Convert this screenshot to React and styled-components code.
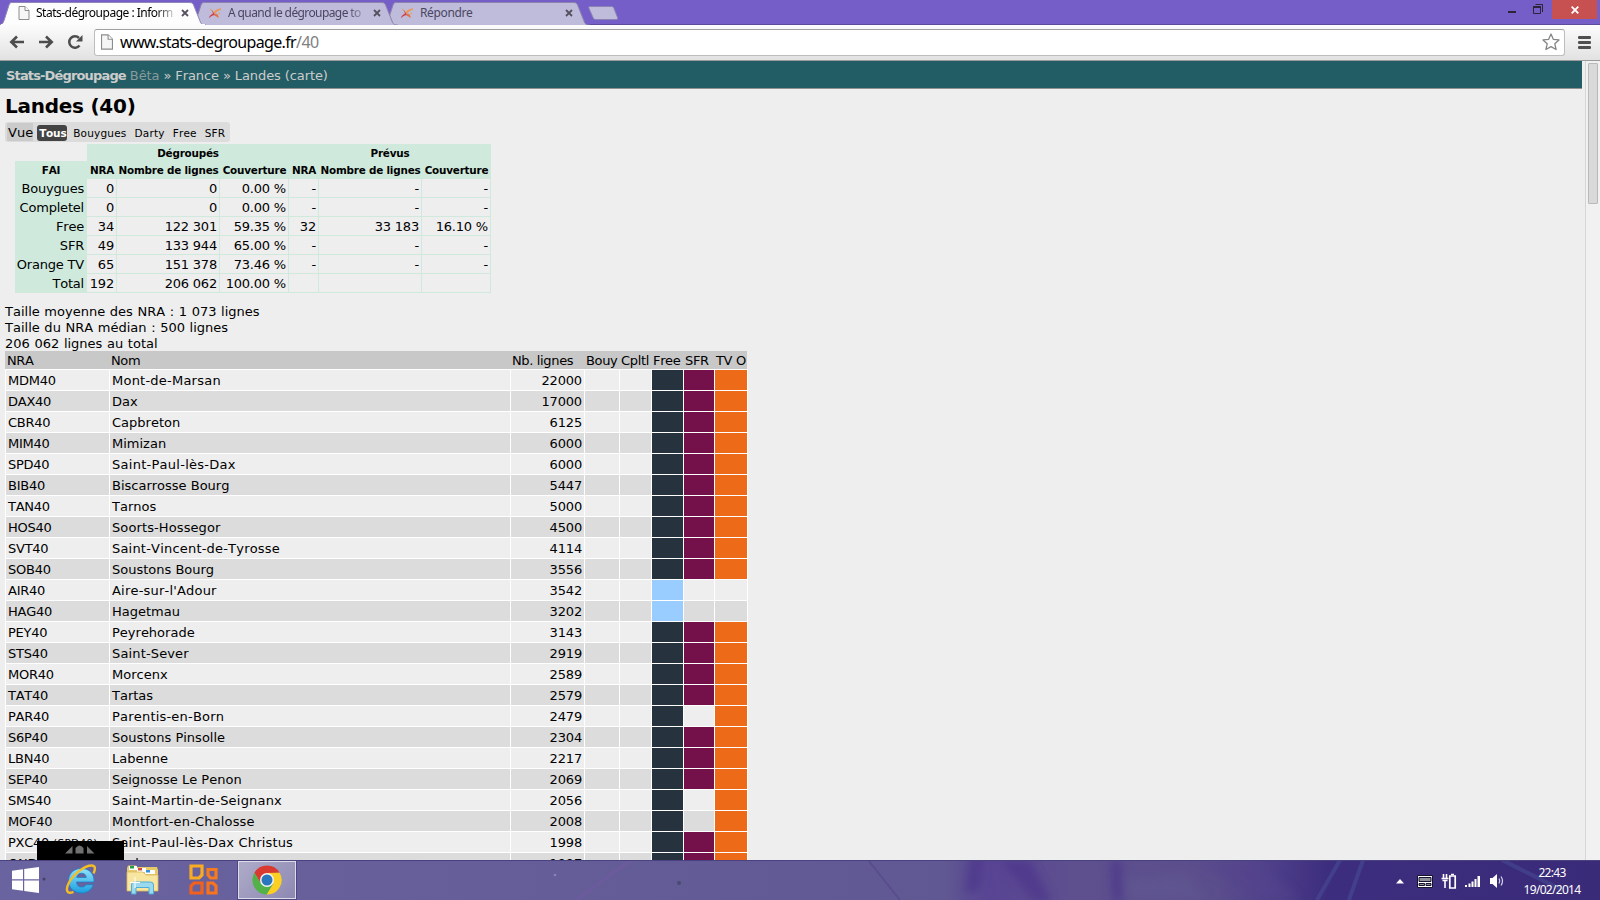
import React from "react";
import styled, { createGlobalStyle } from "styled-components";

const GlobalStyle = createGlobalStyle`
  * {
    box-sizing: border-box;
  }
  body {
    margin: 0;
    overflow: hidden;
    font-family: "DejaVu Sans", Verdana, sans-serif;
    font-size: 13px;
    font-kerning: none;
    color: #000;
  }
  svg {
    display: block;
    flex: none;
  }
`;

const fais = [
  ["Bouygues", "0", "0", "0.00 %", "-", "-", "-"],
  ["Completel", "0", "0", "0.00 %", "-", "-", "-"],
  ["Free", "34", "122 301", "59.35 %", "32", "33 183", "16.10 %"],
  ["SFR", "49", "133 944", "65.00 %", "-", "-", "-"],
  ["Orange TV", "65", "151 378", "73.46 %", "-", "-", "-"],
  ["Total", "192", "206 062", "100.00 %", "", "", ""],
];

// free: "on" | "planned", sfr / tv: degrouped or not
const nras = [
  { code: "MDM40", name: "Mont-de-Marsan", lines: 22000, free: "on", sfr: true, tv: true },
  { code: "DAX40", name: "Dax", lines: 17000, free: "on", sfr: true, tv: true },
  { code: "CBR40", name: "Capbreton", lines: 6125, free: "on", sfr: true, tv: true },
  { code: "MIM40", name: "Mimizan", lines: 6000, free: "on", sfr: true, tv: true },
  { code: "SPD40", name: "Saint-Paul-lès-Dax", lines: 6000, free: "on", sfr: true, tv: true },
  { code: "BIB40", name: "Biscarrosse Bourg", lines: 5447, free: "on", sfr: true, tv: true },
  { code: "TAN40", name: "Tarnos", lines: 5000, free: "on", sfr: true, tv: true },
  { code: "HOS40", name: "Soorts-Hossegor", lines: 4500, free: "on", sfr: true, tv: true },
  { code: "SVT40", name: "Saint-Vincent-de-Tyrosse", lines: 4114, free: "on", sfr: true, tv: true },
  { code: "SOB40", name: "Soustons Bourg", lines: 3556, free: "on", sfr: true, tv: true },
  { code: "AIR40", name: "Aire-sur-l'Adour", lines: 3542, free: "planned", sfr: false, tv: false },
  { code: "HAG40", name: "Hagetmau", lines: 3202, free: "planned", sfr: false, tv: false },
  { code: "PEY40", name: "Peyrehorade", lines: 3143, free: "on", sfr: true, tv: true },
  { code: "STS40", name: "Saint-Sever", lines: 2919, free: "on", sfr: true, tv: true },
  { code: "MOR40", name: "Morcenx", lines: 2589, free: "on", sfr: true, tv: true },
  { code: "TAT40", name: "Tartas", lines: 2579, free: "on", sfr: true, tv: true },
  { code: "PAR40", name: "Parentis-en-Born", lines: 2479, free: "on", sfr: false, tv: true },
  { code: "S6P40", name: "Soustons Pinsolle", lines: 2304, free: "on", sfr: true, tv: true },
  { code: "LBN40", name: "Labenne", lines: 2217, free: "on", sfr: true, tv: true },
  { code: "SEP40", name: "Seignosse Le Penon", lines: 2069, free: "on", sfr: true, tv: true },
  { code: "SMS40", name: "Saint-Martin-de-Seignanx", lines: 2056, free: "on", sfr: false, tv: true },
  { code: "MOF40", name: "Montfort-en-Chalosse", lines: 2008, free: "on", sfr: false, tv: true },
  { code: "PXC40", parent: "(SPD40)", name: "Saint-Paul-lès-Dax Christus", lines: 1998, free: "on", sfr: true, tv: true },
  { code: "OND40", name: "Ondres", lines: 1997, free: "on", sfr: true, tv: true },
];

const freeColors = { on: "#26323d", planned: "#99ccff" };

// hyphenated names are set a little wider
const nameSpacing = (name) => ((name.split("-").length - 1) * 1.6) / name.length;

function PageIcon({ w = 11, h = 14 }) {
  return (
    <svg width={w} height={h} viewBox="0 0 11 14">
      <path d="M.5.5h6l4 4v9H.5z" fill="#f6f6f6" stroke="#8c8c8c" />
      <path d="M6.5.5v4h4" fill="#fff" stroke="#8c8c8c" />
    </svg>
  );
}

function BirdIcon() {
  return (
    <svg width="14" height="13" viewBox="0 0 15 13">
      <path d="M1 1.500c2.500 0 4 1.500 5 3.500C8 2.500 10 1.500 14 1l-.5 2c-2 .2-3.500.8-4.500 2.500l-2 2C6 5 4 3.500 1 1.500z" fill="#e79a5c" />
      <path d="M3.500 2.500C5 3.500 6.500 6 7.500 8.500c-2 0-4 .5-6.500 3 .3-2 2-4 4.200-4.700C5 5 4.500 3.800 3.500 2.500z" fill="#cf3f4e" />
      <path d="M8 6.500c2 .2 3 2 3.500 4.500C10 10.500 9 9.500 7.200 8.800z" fill="#e2703a" />
      <circle cx="12" cy="6.500" r=".9" fill="#e79a5c" />
    </svg>
  );
}

function CloseIcon() {
  return (
    <svg width="8" height="8" viewBox="0 0 8 8">
      <path d="M1 1l6 6M7 1L1 7" stroke="#55515f" strokeWidth="1.800" />
    </svg>
  );
}

function Tab({ active, title, textSpacing, level, fade }) {
  const w = 206;
  const shape = `M0 25C3 24 3.500 22 4.500 19L9 5C10 2.500 11 2.500 13 2.500H${w - 17}C${w - 14} 2.500 ${w - 13} 3 ${w - 12} 6L${w - 6} 21C${w - 5} 24 ${w - 4} 25 ${w} 25`;
  return (
    <TabBox $width={w} $level={level}>
      <TabShape width={w} height="25" viewBox={`0 0 ${w} 25`}>
        <path d={shape} fill={active ? "#fdfdfd" : "#bebcda"} stroke={active ? "#8f86b8" : "#8b82ad"} />
        {active && <path d={`M1 25H${w - 1}`} stroke="#fcfcfc" strokeWidth="2" />}
      </TabShape>
      <TabContent $active={active}>
        {active ? <PageIcon w={12} /> : <BirdIcon />}
        <TabTitle $active={active} $spacing={textSpacing} $fade={fade}>
          {title}
        </TabTitle>
        <CloseIcon />
      </TabContent>
    </TabBox>
  );
}

function BrowserChrome() {
  return (
    <>
      <TabStrip>
        <Tab active title="Stats-dégroupage : Inform" textSpacing={-0.5} level={3} fade />
        <Tab title="A quand le dégroupage to" textSpacing={-0.6} level={2} fade />
        <Tab title="Répondre" textSpacing={-0.35} level={1} />
        <svg width="33" height="16" viewBox="0 0 33 16">
          <path d="M3 1.500H24c2 0 2.500.5 3 2l3.500 9c.5 1.500 0 2-1.500 2H9c-2 0-2.500-.7-3-2L2 3.500C1.500 2 1.500 1.500 3 1.500z" fill="#bebcda" stroke="#8b82b5" />
        </svg>
        <WindowControls>
          <svg width="9" height="20" viewBox="0 0 9 20">
            <path d="M0 12h8" stroke="#2b2535" strokeWidth="2" />
          </svg>
          <svg width="11" height="20" viewBox="0 0 11 20">
            <path d="M2.500 4.500H9.500V12" fill="none" stroke="#2b2535" />
            <path d="M.5 7h7v6.500h-7z" fill="none" stroke="#2b2535" />
            <path d="M0 7h8" stroke="#2b2535" strokeWidth="2" />
          </svg>
          <CloseWindow>
            <svg width="8" height="8" viewBox="0 0 8 8">
              <path d="M.7.7l6.600 6.600M7.300.7L.7 7.300" stroke="#fff" strokeWidth="1.800" />
            </svg>
          </CloseWindow>
        </WindowControls>
      </TabStrip>
      <Toolbar>
        <svg width="16" height="14" viewBox="0 0 16 14">
          <path d="M15 7H3M8 1.500L2.300 7 8 12.500" fill="none" stroke="#4d4d4d" strokeWidth="2.600" />
        </svg>
        <svg width="16" height="14" viewBox="0 0 16 14">
          <path d="M1 7h12M8 1.500L13.700 7 8 12.500" fill="none" stroke="#4d4d4d" strokeWidth="2.600" />
        </svg>
        <svg width="16" height="16" viewBox="0 0 16 16">
          <path d="M12.500 11.500A5.700 5.700 0 1 1 12 4" fill="none" stroke="#4d4d4d" strokeWidth="2.500" />
          <path d="M15.500 1v6.500H9z" fill="#4d4d4d" />
        </svg>
        <Omnibox>
          <PageIcon w={12} h={16} />
          <Url>
            www.stats-degroupage.fr<span>/40</span>
          </Url>
          <svg width="18" height="18" viewBox="0 0 18 18">
            <path d="M9 1l2.300 5.300 5.700.6-4.200 3.900 1.300 5.700L9 13.600l-5.100 2.900 1.300-5.700L1 6.900l5.700-.6z" fill="#fff" stroke="#858585" strokeWidth="1.300" strokeLinejoin="round" />
          </svg>
        </Omnibox>
        <svg width="13" height="13" viewBox="0 0 13 13">
          <path d="M1.200 1.500h10.600M1.200 6.500h10.600M1.200 11.500h10.600" stroke="#4f4f4f" strokeWidth="2.800" strokeLinecap="round" />
        </svg>
      </Toolbar>
    </>
  );
}

function Summary() {
  return (
    <SummaryGrid>
      <SummaryBlank />
      <SummaryHead $span={3}>Dégroupés</SummaryHead>
      <SummaryHead $span={3}>Prévus</SummaryHead>
      {["FAI", "NRA", "Nombre de lignes", "Couverture", "NRA", "Nombre de lignes", "Couverture"].map((h, i) => (
        <SummaryHead key={i}>{h}</SummaryHead>
      ))}
      {fais.map(([name, ...values]) => (
        <React.Fragment key={name}>
          <SummaryName>{name}</SummaryName>
          {values.map((v, i) => (
            <SummaryCell key={i}>{v}</SummaryCell>
          ))}
        </React.Fragment>
      ))}
    </SummaryGrid>
  );
}

function NraTable() {
  return (
    <NraWrapper>
      <NraHeader>
        {["NRA", "Nom", "Nb. lignes", "Bouy", "Cpltl", "Free", "SFR", "TV O"].map((h) => (
          <span key={h}>{h}</span>
        ))}
      </NraHeader>
      {nras.map((n, i) => (
        <NraRow key={n.code} $odd={i % 2 === 1}>
          <NraCell $spacing={-0.25}>
            {n.code} {n.parent && <small>{n.parent}</small>}
          </NraCell>
          <NraCell $spacing={nameSpacing(n.name)}>{n.name}</NraCell>
          <NraCell $right $spacing={-0.15}>
            {n.lines}
          </NraCell>
          <NraCell />
          <NraCell />
          <NraCell $color={freeColors[n.free]} />
          <NraCell $color={n.sfr && "#74114a"} />
          <NraCell $color={n.tv && "#ec6a18"} />
        </NraRow>
      ))}
    </NraWrapper>
  );
}

function StartIcon() {
  return (
    <svg width="27" height="26" viewBox="0 0 27 26">
      <path d="M0 3.800L11 2.200V12.300H0zM12.200 2L27 0V12.300H12.200zM0 13.500H11V23.700L0 22.200zM12.200 13.500H27V26L12.200 23.900z" fill="#fff" />
    </svg>
  );
}

function IeIcon() {
  return (
    <svg width="32" height="31" viewBox="0 0 32 31">
      <defs>
        <linearGradient id="ie" x1="0" y1="0" x2="0" y2="1">
          <stop offset="0" stopColor="#8fe2fb" />
          <stop offset="1" stopColor="#1b9fe0" />
        </linearGradient>
      </defs>
      <path
        d="M29 18H11.500c.2 3.500 2.300 5 5 5 2.200 0 3.500-.8 4.500-2.300h7.200C26.500 26 22.200 29 16.500 29 9 29 3.500 24 3.500 16.800 3.500 9.500 9 4.500 16.300 4.500 24.500 4.500 29.500 10 29 18zM11.700 13.500h9.600c-.3-2.700-2-4.200-4.700-4.200-2.700 0-4.500 1.500-4.900 4.200z"
        fill="url(#ie)"
        stroke="#1680c4"
        strokeWidth=".7"
      />
      <path d="M28.500 9.500C31 4 30 1.500 26.500 1.500 20 1.500 9 9.500 4 18.500 0 26 2 31 8.500 27.800" fill="none" stroke="#f3bd25" strokeWidth="2.400" />
    </svg>
  );
}

function ExplorerIcon() {
  return (
    <svg width="33" height="31" viewBox="0 0 33 31">
      <path d="M1 4l1-2.500h8L11 3h20l1 3v21H1z" fill="#e6c969" />
      <path d="M3 2h8v4H3z" fill="#fff" />
      <path d="M4 2h4v2.500H4z" fill="#24a148" />
      <path d="M11 4h9v4h-9z" fill="#fff" />
      <path d="M12 4h4v2.500h-4z" fill="#d64b35" />
      <path d="M19 6h10v4H19z" fill="#fff" />
      <path d="M20 6h4v2.500h-4z" fill="#3390dd" />
      <path d="M1 8h16l3 3h12v16H1z" fill="#f8e6a0" stroke="#d8b95e" strokeWidth=".8" />
      <path d="M5.500 30V21q0-3 3-3h16q3 0 3 3v9h-4.500v-6.500H10V30z" fill="#9bd9ef" stroke="#4fadd6" />
      <path d="M9 13v11M4 18.500h10" stroke="#fff" strokeWidth="1" />
    </svg>
  );
}

function OfficeIcon() {
  return (
    <svg width="29" height="31" viewBox="0 0 29 31">
      <g fill="none" strokeWidth="3.200">
        <path d="M2 2h11v9L10 14H2z" stroke="#f9ab22" />
        <path d="M19 5.500H27v8.500H21.500L19 11z" stroke="#f47b20" />
        <path d="M5 19h8v10H2v-7z" stroke="#f2601d" />
        <path d="M19 19h5l3 3v7h-8z" stroke="#f9731d" />
      </g>
    </svg>
  );
}

function ChromeIcon() {
  return (
    <svg width="30" height="30" viewBox="0 0 30 30">
      <path d="M2.400 7.700A14.500 14.500 0 0 1 27.600 7.700L15 8 9 18.500z" fill="#d93a30" />
      <path d="M27.600 7.700A14.500 14.500 0 0 1 14.500 29.500L21.300 18.500 15 8z" fill="#fbd023" />
      <path d="M14.500 29.500A14.500 14.500 0 0 1 2.400 7.700L9 18.500 21.300 18.500z" fill="#52b148" />
      <circle cx="15" cy="15" r="7" fill="#f4f4f4" />
      <circle cx="15" cy="15" r="5.500" fill="#2b77bd" />
    </svg>
  );
}

function Taskbar() {
  return (
    <TaskbarWrapper>
      <Wallpaper width="1600" height="40" viewBox="0 0 1600 40" preserveAspectRatio="none">
        <defs>
          <linearGradient id="wall" x1="0" x2="1" y1="0" y2="0">
            <stop offset="0" stopColor="#6963a0" />
            <stop offset=".3" stopColor="#655e98" />
            <stop offset=".59" stopColor="#605892" />
            <stop offset=".62" stopColor="#584493" />
            <stop offset=".67" stopColor="#5e508f" />
            <stop offset=".76" stopColor="#5b4e8c" />
            <stop offset=".79" stopColor="#50428b" />
            <stop offset=".83" stopColor="#3d2d7e" />
            <stop offset="1" stopColor="#3a2b79" />
          </linearGradient>
          <filter id="soft">
            <feGaussianBlur stdDeviation="5" />
          </filter>
        </defs>
        <path d="M0 0H1600V40H0z" fill="url(#wall)" />
        <g filter="url(#soft)" opacity=".6">
          <path d="M970 -5l14 0-4 35-16 4zM1000 0h30l22 42h-18zM1110 0h12l2 42h-12z" fill="#48318a" />
          <path d="M1195 0h60l45 40h-40z" fill="#54438d" />
          <path d="M1126 18l60-4 20 26h-80z" fill="#615890" />
        </g>
        <path d="M631 0l-55 40" stroke="#735aa2" strokeWidth="4" opacity=".5" />
        <path d="M868 0l32 40" stroke="#51418b" strokeWidth="2" opacity=".5" />
        <path d="M1340 0l-23 40M1363 0l-14 40M1502 0l60 30" stroke="#4b5aa0" strokeWidth="4" opacity=".4" />
        <circle cx="44" cy="19" r="1.500" fill="#454068" />
        <circle cx="679" cy="23" r="2" fill="#494a70" />
        <circle cx="555" cy="15" r="1.300" fill="#8984b6" />
        <path d="M0 .5H1600" stroke="#4a4280" />
      </Wallpaper>
      <TaskItem $width={50}><StartIcon /></TaskItem>
      <TaskItem $width={62}><IeIcon /></TaskItem>
      <TaskItem $width={61}><ExplorerIcon /></TaskItem>
      <TaskItem $width={61}><OfficeIcon /></TaskItem>
      <TaskItem $width={58} $active><ChromeIcon /></TaskItem>
      <Tray>
        <svg width="8" height="5" viewBox="0 0 8 5">
          <path d="M4 0l4 4.500H0z" fill="#fff" />
        </svg>
        <svg width="16" height="13" viewBox="0 0 16 13">
          <path d="M.5.5h15v12H.5z" fill="#fff" stroke="#17122e" />
          <path d="M2 2.500h12v4H2zM2 8.500h5.500v2H2zM9 8.500h5v2H9z" fill="#8f9298" stroke="#17122e" />
        </svg>
        <svg width="16" height="17" viewBox="0 0 16 17">
          <path d="M2.500 1v4M5.500 1v4M.5 5.500h7M1.500 7.500h5M4 8v7" stroke="#fff" strokeWidth="1.600" fill="none" />
          <path d="M8.800 3h5.400v12H8.800z" fill="#3a2b79" stroke="#fff" strokeWidth="1.700" />
          <path d="M10 1.500h3" stroke="#fff" strokeWidth="1.500" />
        </svg>
        <svg width="16" height="13" viewBox="0 0 16 13">
          <path d="M0 10h2v2H0zM3.500 8.500h2V12h-2zM6.500 6.500h2V12h-2zM9.500 4h2v8h-2zM12.500 1H15v11h-2.500z" fill="#fff" />
        </svg>
        <svg width="16" height="16" viewBox="0 0 16 16">
          <path d="M1 5h2.500L8 1v14l-4.500-4H1z" fill="#fff" />
          <path d="M10 5.500q1.500 2.500 0 5M12 3.500q3 4.500 0 9" fill="none" stroke="#d5d0ea" strokeWidth="1.200" />
        </svg>
        <Clock>
          <span>22:43</span>
          <span>19/02/2014</span>
        </Clock>
      </Tray>
    </TaskbarWrapper>
  );
}

export default function App() {
  return (
    <Screen>
      <GlobalStyle />
      <BrowserChrome />
      <Viewport>
        <Page>
          <SiteHeader>
            <b>Stats-Dégroupage</b> <i>Bêta</i> » France » Landes (carte)
          </SiteHeader>
          <Title>Landes (40)</Title>
          <ViewBar>
            <ViewLabel>Vue</ViewLabel>
            <ViewLink $active>Tous</ViewLink>
            <ViewLink>Bouygues</ViewLink>
            <ViewLink>Darty</ViewLink>
            <ViewLink>Free</ViewLink>
            <ViewLink>SFR</ViewLink>
          </ViewBar>
          <Summary />
          <Stats>
            <div>Taille moyenne des NRA : 1 073 lignes</div>
            <div>Taille du NRA médian : 500 lignes</div>
            <div>206 062 lignes au total</div>
          </Stats>
          <NraTable />
        </Page>
        <Scrollbar>
          <ScrollThumb />
        </Scrollbar>
        <Popup>
          <svg width="30" height="9" viewBox="0 0 30 9">
            <path d="M0 8.500L7.500 1v7.500zM22 1l7.500 7.500H22zM10.500 8.500V3q4-5 8 0v5.500z" fill="#707070" />
          </svg>
        </Popup>
      </Viewport>
      <Taskbar />
    </Screen>
  );
}

const Screen = styled.div`
  width: 1600px;
  height: 900px;
  display: flex;
  flex-direction: column;
  overflow: hidden;
`;

const TabStrip = styled.div`
  height: 25px;
  flex: none;
  display: flex;
  align-items: flex-start;
  background: #755ec8;
  box-shadow: inset 0 -1px #5c4a9c;
  & > svg {
    margin: 5px 0 0 -3px;
  }
`;

const TabBox = styled.div`
  position: relative;
  width: ${(p) => p.$width}px;
  height: 25px;
  flex: none;
  z-index: ${(p) => p.$level};
  & + & {
    margin-left: -14px;
  }
`;

const TabShape = styled.svg`
  position: absolute;
  left: 0;
  top: 0;
`;

const TabContent = styled.div`
  position: relative;
  display: flex;
  align-items: center;
  height: 26px;
  padding: 0 17px 0 ${(p) => (p.$active ? 18 : 16)}px;
`;

const TabTitle = styled.span`
  flex: 1;
  min-width: 0;
  margin: 0 6px 0 6px;
  overflow: hidden;
  white-space: nowrap;
  font: 12px/16px "Noto Sans", "Open Sans", sans-serif;
  letter-spacing: ${(p) => p.$spacing}px;
  color: ${(p) => (p.$active ? "#000" : "#4b4660")};
  ${(p) => p.$fade && "mask-image: linear-gradient(90deg, #000 86%, transparent 102%);"}
`;

const WindowControls = styled.div`
  display: flex;
  margin-left: auto;
  padding-right: 3px;
  & > svg:first-child {
    margin-right: 16px;
  }
  & > svg + svg {
    margin-right: 8px;
  }
`;

const CloseWindow = styled.div`
  width: 45px;
  height: 19px;
  display: flex;
  align-items: center;
  justify-content: center;
  background: #c75050;
`;

const Toolbar = styled.div`
  height: 36px;
  flex: none;
  display: flex;
  align-items: center;
  padding: 0 9px 1px 9px;
  background: linear-gradient(#fcfcfc, #e2e2e2);
  border-bottom: 1px solid #9b9b9b;
  & > svg {
    margin-right: 13px;
  }
  & > svg:last-child {
    margin: 0 0 0 13px;
  }
`;

const Omnibox = styled.div`
  flex: 1;
  height: 27px;
  margin-left: -2px;
  padding: 0 4px 0 6px;
  display: flex;
  align-items: center;
  background: #fff;
  border: 1px solid #bdbdbd;
  border-top-color: #a0a0a0;
  border-radius: 3px;
`;

const Url = styled.div`
  flex: 1;
  margin-left: 7px;
  font: 16px/20px "Noto Sans", "Open Sans", sans-serif;
  letter-spacing: -0.65px;
  span {
    color: #808080;
  }
`;

const Viewport = styled.div`
  position: relative;
  height: 799px;
  flex: none;
  display: flex;
  overflow: hidden;
  background: #eee;
`;

const Page = styled.div`
  width: 1582px;
  height: 799px;
  overflow: hidden;
`;

const SiteHeader = styled.div`
  height: 28px;
  padding: 1px 6px 0;
  line-height: 28px;
  background: #225c64;
  border-bottom: 1px solid #8f9090;
  color: #ccc;
  letter-spacing: -0.1px;
  b {
    letter-spacing: -0.85px;
  }
  i {
    font-style: normal;
    color: #8a9a9c;
  }
`;

const Title = styled.h1`
  margin: 5px 0 4px 5px;
  font-size: 20px;
  line-height: 24px;
  letter-spacing: -0.25px;
`;

const ViewBar = styled.div`
  width: 225px;
  height: 20px;
  margin-left: 5px;
  padding: 0 2px;
  display: flex;
  align-items: center;
  background: #dcdcdc;
  border-radius: 3px;
  white-space: nowrap;
`;

const ViewLabel = styled.span`
  width: 27px;
  height: 18px;
  margin-right: 4px;
  line-height: 19px;
  padding-left: 1px;
  background: #cbcbcb;
`;

const ViewLink = styled.span`
  height: 16px;
  margin-top: 2px;
  padding: 0 2px;
  margin-right: 4px;
  line-height: 16px;
  font-size: 10.5px;
  letter-spacing: 0.2px;
  border-radius: 3px;
  ${(p) => p.$active && "width: 30px; background: #444; color: #fff; font-weight: bold; letter-spacing: -0.2px;"}
`;

const SummaryGrid = styled.div`
  display: grid;
  grid-template-columns: 72px 30px 103px 69px 30px 103px 69px;
  grid-template-rows: 17px 18px repeat(6, 19px);
  width: 476px;
  margin: 2px 0 0 15px;
  letter-spacing: -0.2px;
`;

const SummaryBlank = styled.div`
  background: #eee;
`;

const SummaryHead = styled.div`
  grid-column: span ${(p) => p.$span || 1};
  background: #cfeadd;
  text-align: center;
  font-size: 10.4px;
  font-weight: bold;
  line-height: 19px;
  height: 18px;
  white-space: nowrap;
`;

const SummaryName = styled.div`
  background: #cfeadd;
  text-align: right;
  padding-right: 3px;
  line-height: 19px;
`;

const SummaryCell = styled.div`
  border-right: 1px solid #cfeadd;
  border-bottom: 1px solid #cfeadd;
  text-align: right;
  padding-right: 2px;
  line-height: 19px;
  white-space: nowrap;
`;

const Stats = styled.div`
  height: 48px;
  margin: 10px 0 0 5px;
  padding-top: 1px;
  line-height: 16px;
  word-spacing: 0.5px;
`;

const NraWrapper = styled.div`
  width: 743px;
  margin-left: 5px;
`;

const NraHeader = styled.div`
  display: grid;
  grid-template-columns: 104px 401px 74px 35px 32px 32px 31px 33px;
  width: 742px;
  height: 18px;
  line-height: 20px;
  background: #c8c8c8;
  white-space: nowrap;
  letter-spacing: -0.35px;
  span {
    padding-left: 2px;
  }
`;

const NraRow = styled.div`
  display: grid;
  grid-template-columns: 104px 401px 74px 35px 32px 32px 31px 33px;
  grid-template-rows: 20px;
  height: 21px;
  border-top: 1px solid #fff;
  border-right: 1px solid #fff;
  background: ${(p) => (p.$odd ? "#dcdcdc" : "#eee")};
`;

const NraCell = styled.div`
  height: 20px;
  border-left: 1px solid #fff;
  padding: 0 2px;
  line-height: 21px;
  white-space: nowrap;
  letter-spacing: ${(p) => p.$spacing || 0}px;
  text-align: ${(p) => (p.$right ? "right" : "left")};
  background: ${(p) => p.$color || "transparent"};
  small {
    font-size: 10.5px;
    letter-spacing: 0.3px;
  }
`;

const Scrollbar = styled.div`
  width: 15px;
  margin-left: auto;
  padding: 2px 2px 0;
  background: #f1f1f1;
  border-left: 1px solid #d6d6d6;
`;

const ScrollThumb = styled.div`
  width: 10px;
  height: 141px;
  background: #d9d9d9;
  border: 1px solid #b9b9b9;
  border-radius: 1px;
`;

const Popup = styled.div`
  position: absolute;
  left: 37px;
  bottom: 0;
  width: 87px;
  height: 19px;
  padding: 4px 0 0 28px;
  background: #000;
`;

const TaskbarWrapper = styled.div`
  position: relative;
  height: 40px;
  flex: none;
  display: flex;
`;

const Wallpaper = styled.svg`
  position: absolute;
  inset: 0;
`;

const TaskItem = styled.div`
  position: relative;
  width: ${(p) => p.$width}px;
  height: 39px;
  display: flex;
  align-items: center;
  justify-content: center;
  ${(p) =>
    p.$active &&
    `
    margin: 1px 0 0 4px;
    height: 38px;
    background: linear-gradient(135deg, #aeabc9, #8d88b2);
    border: 1px solid #dedbe9;
    outline: 1px solid #4d4682;
  `}
`;

const Tray = styled.div`
  position: relative;
  display: flex;
  align-items: center;
  gap: 8px;
  margin-left: auto;
  padding: 2px 18px 0 0;
  & > svg:first-child {
    margin-right: 5px;
  }
`;

const Clock = styled.div`
  display: flex;
  flex-direction: column;
  align-items: center;
  width: 60px;
  margin-left: 9px;
  color: #fff;
  font: 12px/17px "Noto Sans", "Open Sans", sans-serif;
  letter-spacing: -0.7px;
`;
